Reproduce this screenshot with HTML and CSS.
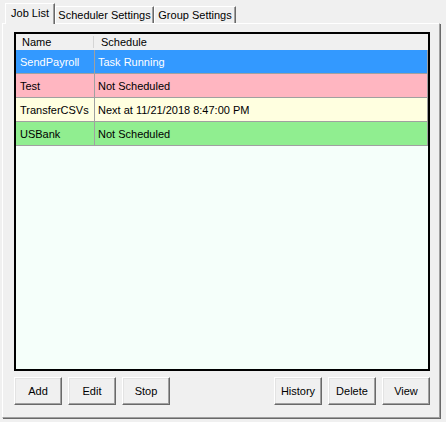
FILE: index.html
```html
<!DOCTYPE html>
<html>
<head>
<meta charset="utf-8">
<link rel="stylesheet" href="styles.css">
</head>
<body>
<div class="window">
  <div class="tabs">
    <div class="tab selected w1">Job List</div>
    <div class="tab w2">Scheduler Settings</div>
    <div class="tab w3">Group Settings</div>
  </div>
  <div class="panel">
    <div class="list">
      <div class="header">
        <div class="hcell name">Name</div>
        <div class="hcell sched">Schedule</div>
      </div>
      <div class="row blue"><div class="cell name">SendPayroll</div><div class="cell sched">Task Running</div></div>
      <div class="row pink"><div class="cell name">Test</div><div class="cell sched">Not Scheduled</div></div>
      <div class="row cream"><div class="cell name">TransferCSVs</div><div class="cell sched">Next at 11/21/2018 8:47:00 PM</div></div>
      <div class="row green"><div class="cell name">USBank</div><div class="cell sched">Not Scheduled</div></div>
    </div>
    <div class="buttons">
      <div class="group">
        <button class="btn">Add</button>
        <button class="btn">Edit</button>
        <button class="btn">Stop</button>
      </div>
      <div class="group">
        <button class="btn">History</button>
        <button class="btn">Delete</button>
        <button class="btn">View</button>
      </div>
    </div>
  </div>
</div>
</body>
</html>
```

FILE: styles.css
```css
html, body {
  margin: 0;
  padding: 0;
  background: #f0f0f0;
  font-family: "Liberation Sans", Arial, sans-serif;
  font-size: 11px;
  color: #000;
}
.window {
  width: 446px;
  height: 422px;
  box-sizing: border-box;
  padding: 3px 0 0 2px;
}
.tabs {
  display: flex;
  align-items: flex-end;
  height: 21px;
  padding-left: 3px;
  margin-bottom: -1px;
  position: relative;
  z-index: 1;
}
.tab {
  box-sizing: border-box;
  height: 17px;
  margin-bottom: 1px;
  padding-top: 2px;
  line-height: 13px;
  text-align: center;
  white-space: nowrap;
  border-top: 1px solid #fff;
  border-left: 1px solid #fff;
  border-right: 1px solid #696969;
  box-shadow: inset -1px 0 0 #a0a0a0;
  background: #f0f0f0;
}
.tab.selected {
  height: 21px;
  margin-bottom: 0;
  padding-top: 3px;
}
.w1 { width: 50px; }
.w2 { width: 99px; }
.w3 { width: 82px; }
.panel {
  box-sizing: border-box;
  width: 438px;
  height: 395px;
  border-top: 1px solid #fff;
  border-left: 1px solid #fff;
  border-right: 1px solid #a0a0a0;
  border-bottom: 1px solid #a0a0a0;
  box-shadow: 1px 1px 0 #696969;
  padding: 8px 9px 12px 11px;
  display: flex;
  flex-direction: column;
  gap: 6px;
}
.list {
  box-sizing: border-box;
  width: 416px;
  height: 339px;
  border: 2px solid #000;
  background: #f5fffa;
}
.header {
  display: flex;
  height: 16px;
  background: #f0f0f0;
  line-height: 15px;
  padding-top: 1px;
  box-sizing: border-box;
}
.hcell.name {
  width: 78px;
  padding-left: 6px;
  box-sizing: border-box;
  position: relative;
}
.hcell.name::after {
  content: "";
  position: absolute;
  right: 0;
  top: 1px;
  bottom: 2px;
  width: 1px;
  background: #d5d5d5;
}
.hcell.sched {
  padding-left: 7px;
}
.row {
  display: flex;
  height: 24px;
  box-sizing: border-box;
  border-bottom: 1px solid #a0a0a0;
}
.cell {
  box-sizing: border-box;
  line-height: 23px;
  padding-top: 1px;
  white-space: nowrap;
  overflow: hidden;
}
.cell.name {
  width: 79px;
  padding-left: 4px;
  border-right: 1px solid #a0a0a0;
}
.cell.sched {
  width: 333px;
  padding-left: 3px;
  border-right: 1px solid #a0a0a0;
}
.blue { background: #3399ff; color: #fff; }
.pink { background: #ffb6c1; }
.cream { background: #ffffe0; }
.green { background: #90ee90; }
.buttons {
  display: flex;
  justify-content: space-between;
}
.group {
  display: flex;
  gap: 6px;
}
.btn {
  box-sizing: border-box;
  width: 48px;
  height: 28px;
  margin: 0;
  padding: 0;
  font-family: "Liberation Sans", Arial, sans-serif;
  font-size: 11px;
  color: #000;
  background: #f0f0f0;
  border-top: 1px solid #fff;
  border-left: 1px solid #fff;
  border-right: 1px solid #696969;
  border-bottom: 1px solid #696969;
  box-shadow: inset -1px -1px 0 #a0a0a0, inset 1px 1px 0 #e3e3e3;
  border-radius: 0;
}
```
